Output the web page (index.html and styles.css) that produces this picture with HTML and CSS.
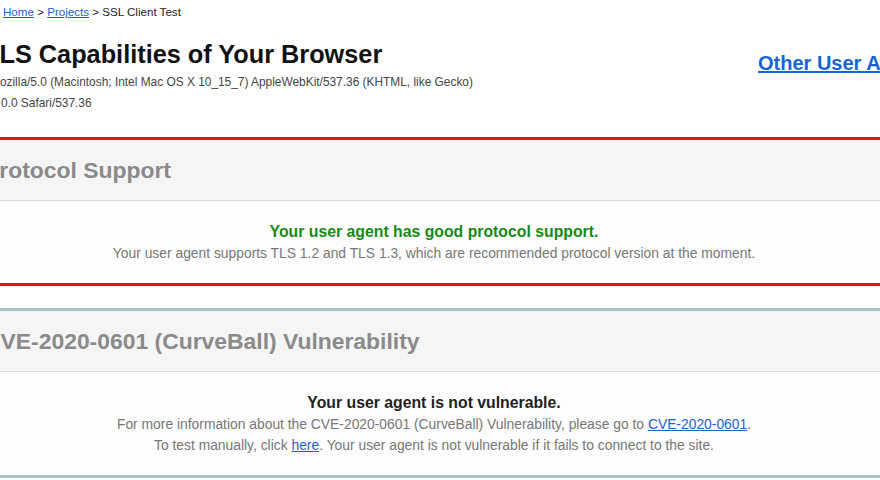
FILE: index.html
```html
<!DOCTYPE html>
<html lang="en">
<head>
<meta charset="utf-8">
<title>SSL Client Test</title>
<link rel="stylesheet" href="styles.css">
</head>
<body>
<div class="page">
  <nav class="crumbs"><a href="#">Home</a> &gt; <a href="#">Projects</a> &gt; SSL Client Test</nav>
  <header class="top">
    <div class="intro">
      <h1 class="title">TLS Capabilities of Your Browser</h1>
      <p class="ua"><span class="ua-line">Mozilla/5.0 (Macintosh; Intel Mac OS X 10_15_7) AppleWebKit/537.36 (KHTML, like Gecko)</span><span class="ua-line ua-tail">0.0 Safari/537.36</span></p>
    </div>
    <a class="other" href="#">Other User Agents</a>
  </header>

  <section class="card card-warn">
    <h2 class="card-head">Protocol Support</h2>
    <div class="card-body">
      <p class="verdict verdict-good">Your user agent has good protocol support.</p>
      <p class="note">Your user agent supports TLS 1.2 and TLS 1.3, which are recommended protocol version at the moment.</p>
    </div>
  </section>

  <section class="card card-ok">
    <h2 class="card-head">CVE-2020-0601 (CurveBall) Vulnerability</h2>
    <div class="card-body">
      <p class="verdict">Your user agent is not vulnerable.</p>
      <p class="note">For more information about the CVE-2020-0601 (CurveBall) Vulnerability, please go to <a href="#">CVE-2020-0601</a>.</p>
      <p class="note">To test manually, click <a href="#">here</a>. Your user agent is not vulnerable if it fails to connect to the site.</p>
    </div>
  </section>
</div>
</body>
</html>
```

FILE: styles.css
```css
html, body {
  margin: 0;
  padding: 0;
  background: #ffffff;
  overflow: hidden;
}

body {
  font-family: "Liberation Sans", Arial, Helvetica, sans-serif;
  color: #222;
  width: 880px;
  height: 480px;
}

.page {
  margin-left: -16px;
  width: 900px;
}

a {
  color: #1a62cf;
  text-decoration: underline;
}

.crumbs {
  padding: 4px 0 0 19px;
  font-size: 11.6px;
  line-height: 15px;
  color: #222;
}

.top {
  display: flex;
  align-items: flex-start;
  margin-top: 20px;
}

.intro {
  flex: 0 0 774px;
}

.title {
  margin: 0;
  font-size: 25.3px;
  line-height: 30px;
  font-weight: bold;
  color: #111;
}

.ua {
  margin: 3px 0 0;
  padding-left: 6px;
  font-size: 11.9px;
  line-height: 21px;
  color: #444;
}

.ua-line {
  display: block;
  white-space: nowrap;
}

.ua-tail {
  padding-left: 11px;
}

.other {
  margin-top: 12px;
  font-size: 20px;
  line-height: 24px;
  font-weight: bold;
  white-space: nowrap;
  color: #1565d0;
}

.card {
  margin: 23px -14px 0;
  border-top: 3px solid #a9c4c2;
  border-bottom: 3px solid #a9c4c2;
  background: #fdfdfd;
}

.card-warn {
  border-color: #e0141b;
}

.card + .card {
  margin-top: 22px;
}

.card-head {
  margin: 0;
  padding: 17px 14px;
  font-size: 22.9px;
  line-height: 26px;
  font-weight: bold;
  color: #8a8a8a;
  background: #f5f5f5;
  border-bottom: 1px solid #dcdcdc;
}

.card-body {
  padding: 20px 14px 19px;
  text-align: center;
}

.verdict {
  margin: 0;
  font-size: 15.8px;
  line-height: 22px;
  font-weight: bold;
  color: #1f1f1f;
}

.verdict-good {
  color: #178a17;
}

.note {
  margin: 0;
  font-size: 13.85px;
  line-height: 21px;
  color: #777;
}
```
